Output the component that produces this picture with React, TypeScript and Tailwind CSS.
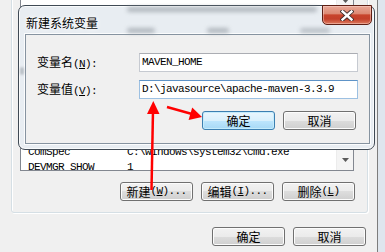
import React from "react";

const cjk = "font-['Noto_Sans_CJK_SC','Noto_Sans',sans-serif] text-[12px]";

function M({ children, u }: { children: React.ReactNode; u?: boolean }) {
  return (
    <span
      className={
        u
          ? "font-['Liberation_Mono',monospace] text-[11px] tracking-[-0.6px] underline underline-offset-[1px]"
          : "font-['Liberation_Mono',monospace] text-[11px] tracking-[-0.6px]"
      }
    >
      {children}
    </span>
  );
}

function Btn({ children, primary }: { children: React.ReactNode; primary?: boolean }) {
  return (
    <div
      className={
        primary
          ? "w-[73px] h-[19px] rounded-[3px] border border-[#3c7fb1] bg-[linear-gradient(#eaf6fd_0%,#d9f0fc_50%,#bee6fd_50%,#a7d9f5_100%)] shadow-[inset_0_0_0_1px_#c5ecfc] flex items-center justify-center leading-[17px] " +
            cjk
          : "w-[73px] h-[19px] rounded-[3px] border border-[#707070] bg-[linear-gradient(#f2f2f2_0%,#ebebeb_50%,#dddddd_50%,#cfcfcf_100%)] shadow-[inset_0_0_0_1px_#fcfcfc] flex items-center justify-center leading-[17px] " +
            cjk
      }
    >
      {children}
    </div>
  );
}

function Row({ name, value, last }: { name: string; value: string; last?: boolean }) {
  return (
    <div className={last ? "flex h-[15px] leading-[15px] shrink-0 mb-[-2px]" : "flex h-[15px] leading-[15px] shrink-0"}>
      <div className="w-[99px] whitespace-nowrap">
        <M>{name}</M>
      </div>
      <div className="whitespace-nowrap">
        <M>{value}</M>
      </div>
    </div>
  );
}

function Tri() {
  return (
    <svg width="7" height="4" viewBox="0 0 7 4">
      <path d="M0 0H7L3.5 4Z" fill="#5a5a5a" />
    </svg>
  );
}

export default function App() {
  return (
    <div className="relative w-[385px] h-[252px] overflow-hidden bg-[#f0f0f0] flex text-black">
      <div className="w-[377px] shrink-0 flex flex-col">
        {/* system variables group box */}
        <div className="ml-[11px] w-[357px] h-[273px] mt-[-60px] shrink-0 border border-[#d5dfe5] rounded-[3px] shadow-[inset_1px_1px_0_#ffffff,1px_1px_0_#ffffff] flex flex-col pl-[8px] pr-[12px]">
          <div className="mt-[10px] h-[220px] w-[334px] shrink-0 border border-[#828790] bg-white flex">
            <div className="flex-1 flex flex-col justify-end overflow-hidden pl-[7px]">
              <Row name="ComSpec" value="C:\windows\system32\cmd.exe" />
              <Row name="DEVMGR_SHOW" value="1" last />
            </div>
            <div className="w-[17px] bg-[#f4f4f4] border-l border-[#ececec] flex flex-col justify-between items-center pt-[47px] pb-[8px]">
              <Tri />
              <Tri />
            </div>
          </div>
          <div className="mt-[11px] flex justify-end gap-[8px]">
            <Btn>
              新建<M>(</M><M u>W</M><M>)...</M>
            </Btn>
            <Btn>
              编辑<M>(</M><M u>I</M><M>)...</M>
            </Btn>
            <Btn>
              删除<M>(</M><M u>L</M><M>)</M>
            </Btn>
          </div>
        </div>
        <div className="mt-[14px] flex justify-end gap-[8px] pr-[11px]">
          <Btn>确定</Btn>
          <Btn>取消</Btn>
        </div>
      </div>
      <div className="w-[1px] shrink-0 bg-[#7d7d7d]" />
      <div className="flex-1 bg-[#dfe6ee]" />

      {/* 新建系统变量 dialog window */}
      <div className="absolute left-[18px] top-[5px] w-[357px] h-[145px] rounded-[7px] border border-[#404a55] bg-[#e8edf2] shadow-[inset_0_0_0_1px_rgba(255,255,255,0.75)] pt-[28px] pl-[6px] pr-[4px] pb-[5px]">
        {/* blurred glass content */}
        <div className="absolute left-[108px] top-[1px] w-[190px] h-[5px] rounded-full bg-[#8c939b] opacity-60 blur-[2px]" />
        <div className="absolute left-[108px] top-[22px] w-[28px] h-[5px] rounded-full bg-[#8c939b] opacity-60 blur-[2px]" />
        <div className="absolute left-[188px] top-[22px] w-[22px] h-[5px] rounded-full bg-[#8c939b] opacity-60 blur-[2px]" />
        <div className="absolute left-[281px] top-[22px] w-[30px] h-[5px] rounded-full bg-[#8c939b] opacity-50 blur-[2px]" />
        <div className="absolute left-[1px] top-[61px] w-[4px] h-[8px] rounded-full bg-[#8c939b] opacity-50 blur-[1px]" />

        <div className={"absolute left-[7px] top-[9px] leading-[16px] [text-shadow:0_0_6px_#ffffff,0_0_3px_#ffffff] " + cjk}>
          新建系统变量
        </div>

        <div className="absolute right-[2px] top-[-1px] w-[50px] h-[20px] rounded-b-[5px] border border-[#5e1f15] bg-[linear-gradient(#e9a898_0%,#dd8a74_42%,#c8442c_50%,#c3402a_72%,#dd7b5f_100%)] shadow-[inset_0_0_0_1px_rgba(255,220,210,0.45)] flex items-center justify-center">
          <svg width="14" height="11" viewBox="0 0 14 11">
            <path d="M2.5 1.5L11.5 9.5M11.5 1.5L2.5 9.5" stroke="#3a2a2a" strokeWidth="4.2" strokeLinecap="square" />
            <path d="M2.5 1.5L11.5 9.5M11.5 1.5L2.5 9.5" stroke="#ffffff" strokeWidth="2.4" strokeLinecap="square" />
          </svg>
        </div>

        <div className="w-full h-full border border-[#8693a0] bg-[#f0f0f0] shadow-[0_0_0_1px_rgba(255,255,255,0.8)] flex flex-col pt-[18px] pl-[11px]">
          <div className="flex items-center h-[19px]">
            <div className={"w-[102px] leading-[16px] whitespace-nowrap " + cjk}>
              变量名<M>(</M><M u>N</M><M>):</M>
            </div>
            <div className="w-[219px] h-[19px] border border-[#c6cad1] border-t-[#abadb3] bg-white pl-[2px] flex items-center leading-[17px]">
              <M>MAVEN_HOME</M>
            </div>
          </div>
          <div className="flex items-center h-[19px] mt-[8px]">
            <div className={"w-[102px] leading-[16px] whitespace-nowrap " + cjk}>
              变量值<M>(</M><M u>V</M><M>):</M>
            </div>
            <div className="w-[219px] h-[19px] border border-[#9cc0e2] border-t-[#5e93c7] bg-white pl-[2px] flex items-center leading-[17px]">
              <M>D:\javasource\apache-maven-3.3.9</M>
            </div>
          </div>
          <div className="mt-[12px] pl-[165px] flex gap-[8px]">
            <Btn primary>确定</Btn>
            <Btn>取消</Btn>
          </div>
        </div>
      </div>

      {/* red annotation arrows */}
      <svg className="absolute left-0 top-0 pointer-events-none" width="385" height="252" viewBox="0 0 385 252">
        <line x1="151.5" y1="190" x2="153" y2="110" stroke="#ff0000" strokeWidth="2.5" />
        <polygon points="153.3,101 147,114 159.5,114" fill="#ff0000" />
        <line x1="167" y1="107" x2="192" y2="114" stroke="#ff0000" strokeWidth="2.5" />
        <polygon points="202,117 188.6,120 192.2,107.6" fill="#ff0000" />
      </svg>
    </div>
  );
}
